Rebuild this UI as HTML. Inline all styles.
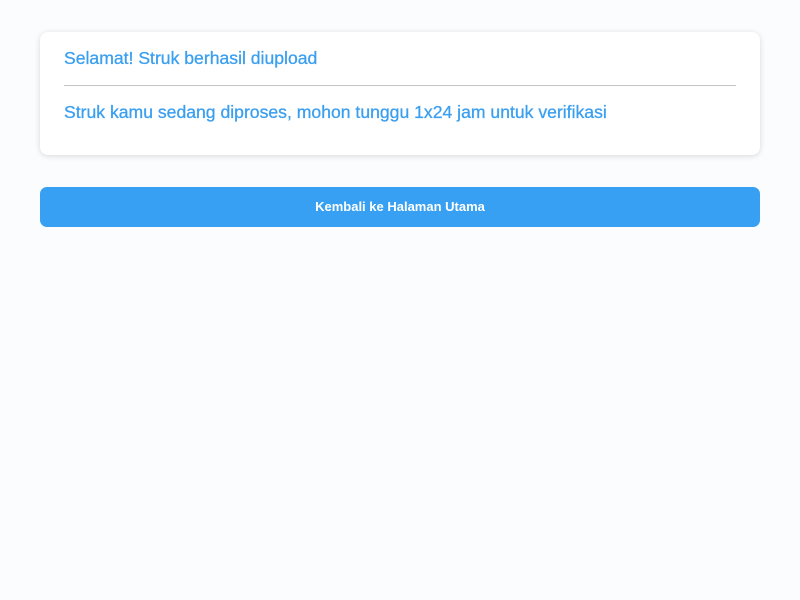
<!DOCTYPE html>
<html><head><meta charset="utf-8"><style>
html,body{margin:0;padding:0;background:#fafcfe;width:800px;height:600px;overflow:hidden;font-family:"Liberation Sans",sans-serif;}
.card{position:absolute;left:40px;top:32px;width:720px;height:123px;background:#fff;border-radius:8px;box-shadow:0 1px 6px rgba(0,0,0,0.15);}
.t{position:absolute;left:24px;color:#3a9ff0;font-size:17.6px;white-space:nowrap;-webkit-text-stroke:0.3px #3a9ff0;}
.hr{position:absolute;left:24px;top:53px;width:672px;height:1px;background:#c4c4c4;}
.btn{position:absolute;left:40px;top:187px;width:720px;height:40px;background:#38a0f2;border-radius:7px;color:#fff;font-weight:bold;font-size:13px;text-align:center;line-height:40px;}
</style></head><body>
<div class="card">
<div class="t" style="top:16px">Selamat! Struk berhasil diupload</div>
<div class="hr"></div>
<div class="t" style="top:70px">Struk kamu sedang diproses, mohon tunggu 1x24 jam untuk verifikasi</div>
</div>
<div class="btn">Kembali ke Halaman Utama</div>
</body></html>
